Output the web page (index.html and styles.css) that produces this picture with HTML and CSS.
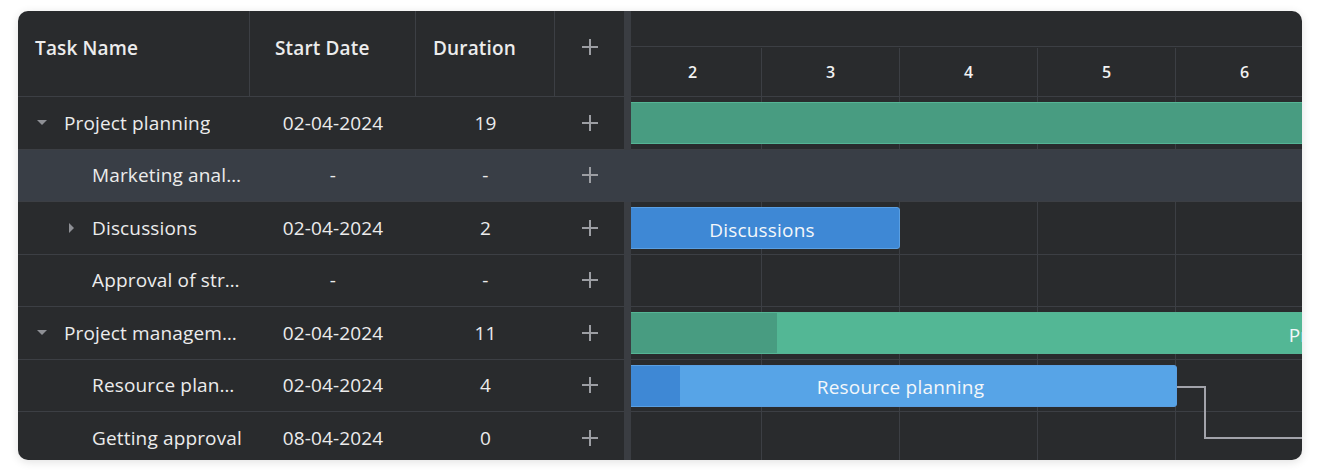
FILE: index.html
```html
<!DOCTYPE html>
<html lang="en">
<head>
  <meta charset="UTF-8">
  <title>Gantt</title>
  <link rel="stylesheet" href="styles.css">
</head>
<body>
  <div class="gantt">
    <div class="grid">
      <div class="grid-head">
        <div class="cell col-name">Task Name</div>
        <div class="cell col-start">Start Date</div>
        <div class="cell col-dur">Duration</div>
        <div class="cell col-add">
          <svg class="plus" viewBox="0 0 16 16"><path d="M8 0v16M0 8h16"/></svg>
        </div>
      </div>

      <div class="grid-row">
        <div class="cell col-name"><span class="toggle"><span class="caret-down"></span></span><span class="name">Project planning</span></div>
        <div class="cell col-start">02-04-2024</div>
        <div class="cell col-dur">19</div>
        <div class="cell col-add"><svg class="plus" viewBox="0 0 16 16"><path d="M8 0v16M0 8h16"/></svg></div>
      </div>
      <div class="grid-row selected">
        <div class="cell col-name lvl1"><span class="toggle"></span><span class="name">Marketing analysis</span></div>
        <div class="cell col-start">-</div>
        <div class="cell col-dur">-</div>
        <div class="cell col-add"><svg class="plus" viewBox="0 0 16 16"><path d="M8 0v16M0 8h16"/></svg></div>
      </div>
      <div class="grid-row">
        <div class="cell col-name lvl1"><span class="toggle"><span class="caret-right"></span></span><span class="name">Discussions</span></div>
        <div class="cell col-start">02-04-2024</div>
        <div class="cell col-dur">2</div>
        <div class="cell col-add"><svg class="plus" viewBox="0 0 16 16"><path d="M8 0v16M0 8h16"/></svg></div>
      </div>
      <div class="grid-row">
        <div class="cell col-name lvl1"><span class="toggle"></span><span class="name">Approval of strategy</span></div>
        <div class="cell col-start">-</div>
        <div class="cell col-dur">-</div>
        <div class="cell col-add"><svg class="plus" viewBox="0 0 16 16"><path d="M8 0v16M0 8h16"/></svg></div>
      </div>
      <div class="grid-row">
        <div class="cell col-name"><span class="toggle"><span class="caret-down"></span></span><span class="name">Project management</span></div>
        <div class="cell col-start">02-04-2024</div>
        <div class="cell col-dur">11</div>
        <div class="cell col-add"><svg class="plus" viewBox="0 0 16 16"><path d="M8 0v16M0 8h16"/></svg></div>
      </div>
      <div class="grid-row">
        <div class="cell col-name lvl1"><span class="toggle"></span><span class="name">Resource planning</span></div>
        <div class="cell col-start">02-04-2024</div>
        <div class="cell col-dur">4</div>
        <div class="cell col-add"><svg class="plus" viewBox="0 0 16 16"><path d="M8 0v16M0 8h16"/></svg></div>
      </div>
      <div class="grid-row">
        <div class="cell col-name lvl1"><span class="toggle"></span><span class="name">Getting approval</span></div>
        <div class="cell col-start">08-04-2024</div>
        <div class="cell col-dur">0</div>
        <div class="cell col-add"><svg class="plus" viewBox="0 0 16 16"><path d="M8 0v16M0 8h16"/></svg></div>
      </div>
    </div>

    <div class="splitter"></div>

    <div class="chart">
      <div class="chart-inner">
        <div class="scale-top"></div>
        <div class="scale">
          <div class="day">2</div>
          <div class="day">3</div>
          <div class="day">4</div>
          <div class="day">5</div>
          <div class="day">6</div>
          <div class="day">7</div>
        </div>
        <div class="chart-body">
          <div class="chart-row">
            <div class="bar project" style="left: 0; width: 2622px;"><span>Project planning</span></div>
          </div>
          <div class="chart-row selected"></div>
          <div class="chart-row">
            <div class="bar task" style="left: 0; width: 276px;"><span>Discussions</span></div>
          </div>
          <div class="chart-row"></div>
          <div class="chart-row">
            <div class="bar project light" style="left: 0; width: 1518px;"><div class="progress" style="width: 10%;"></div><span>Project management</span></div>
          </div>
          <div class="chart-row">
            <div class="bar task light" style="left: 0; width: 553px;"><div class="progress" style="width: 10%;"></div><span>Resource planning</span></div>
          </div>
          <div class="chart-row"></div>

          <!-- finish-to-start link: Resource planning -> Getting approval -->
          <svg class="link" width="800" height="400">
            <polyline points="553,290 581,290 581,341 800,341"/>
          </svg>
        </div>
      </div>
    </div>
  </div>
</body>
</html>
```

FILE: styles.css
```css
body {
  margin: 0;
  background: #fff;
  font-family: 'Open Sans', 'Noto Sans', sans-serif;
  color: #ececec;
}
.gantt {
  display: flex;
  margin: 11px 18px;
  width: 1284px;
  height: 449px;
  background: #292b2d;
  border-radius: 10px;
  overflow: hidden;
  box-shadow: 0 2px 10px rgba(0, 0, 0, 0.12);
}

/* left grid */
.grid {
  width: 606px;
  flex: none;
}
.grid-head {
  display: flex;
  height: 86px;
  box-sizing: border-box;
  border-bottom: 1px solid #3c3f44;
}
.grid-head .cell {
  align-items: flex-start;
  padding-top: 24px;
  font-weight: 600;
  border-right: 1px solid #3c3f44;
  box-sizing: border-box;
}
.grid-head .col-add {
  border-right: none;
  justify-content: center;
  padding-top: 28px;
}
.grid-head .col-start {
  padding-left: 25px;
  justify-content: flex-start;
}
.grid-head .col-dur {
  padding-left: 17px;
  justify-content: flex-start;
}
.grid-row {
  display: flex;
  height: 52.5px;
  box-sizing: border-box;
  border-bottom: 1px solid #3c3f44;
}
.grid-row.selected {
  background: #393e46;
  position: relative;
  z-index: 1;
  box-shadow: 7px 0 0 #393e46;
}
.cell {
  display: flex;
  align-items: center;
  justify-content: center;
  font-size: 19px;
  letter-spacing: 0.15px;
  line-height: 26px;
  white-space: nowrap;
}
.col-name {
  width: 232px;
  justify-content: flex-start;
  padding: 0 7px 0 17px;
  box-sizing: border-box;
}
.col-name.lvl1 {
  padding-left: 45px;
}
.col-start { width: 166px; }
.col-dur { width: 139px; }
.col-add { width: 69px; }
.name {
  overflow: hidden;
  text-overflow: ellipsis;
  min-width: 0;
}
.toggle {
  flex: none;
  width: 14px;
  margin-right: 15px;
  display: flex;
  justify-content: center;
}
.caret-down {
  width: 0;
  height: 0;
  border-left: 5px solid transparent;
  border-right: 5px solid transparent;
  border-top: 5px solid #8e9095;
}
.caret-right {
  width: 0;
  height: 0;
  margin-left: 2px;
  border-top: 5px solid transparent;
  border-bottom: 5px solid transparent;
  border-left: 5px solid #8e9095;
}
.plus {
  width: 16px;
  height: 16px;
  stroke: #9c9ea3;
  stroke-width: 2;
  fill: none;
}

.splitter {
  width: 7px;
  flex: none;
  background: #3a3d42;
}

/* timeline */
.chart {
  flex: 1;
  overflow: hidden;
}
.chart-inner {
  margin-left: -7px;
  width: 3000px;
}
.scale-top {
  height: 36px;
  box-sizing: border-box;
  border-bottom: 1px solid #3c3f44;
}
.scale {
  display: flex;
  height: 50px;
  padding-top: 1px;
  box-sizing: border-box;
  border-bottom: 1px solid #3c3f44;
}
.day {
  width: 138px;
  flex: none;
  box-sizing: border-box;
  border-right: 1px solid #3c3f44;
  display: flex;
  align-items: center;
  justify-content: center;
  font-size: 16px;
  font-weight: 600;
  color: #f2f2f2;
}
.chart-body {
  position: relative;
}
.chart-row {
  position: relative;
  height: 52.5px;
  box-sizing: border-box;
  border-bottom: 1px solid #3c3f44;
  background-image: linear-gradient(to right, transparent 137px, #3c3f44 137px);
  background-size: 138px 100%;
}
.chart-row.selected {
  background: #393e46;
}
.bar {
  position: absolute;
  top: 5px;
  height: 42px;
  padding-top: 3px;
  box-sizing: border-box;
  border-radius: 3px;
  overflow: hidden;
  display: flex;
  align-items: center;
  justify-content: center;
  font-size: 19px;
  letter-spacing: 0.2px;
  color: #f4f7fa;
}
.bar span {
  position: relative;
}
.bar .progress {
  position: absolute;
  left: 0;
  top: 0;
  bottom: 0;
}
.bar.project {
  background: #489c81;
  border: 1px solid #55b595;
}
.bar.project.light {
  background: #53b795;
}
.bar.project .progress {
  background: #489c81;
}
.bar.task {
  background: #3e88d5;
  border: 1px solid #5a9fe2;
}
.bar.task.light {
  background: #57a4e7;
}
.bar.task .progress {
  background: #3e88d5;
}
.link {
  position: absolute;
  left: 0;
  top: 0;
  fill: none;
  stroke: #a2a3aa;
  stroke-width: 2;
}
```
